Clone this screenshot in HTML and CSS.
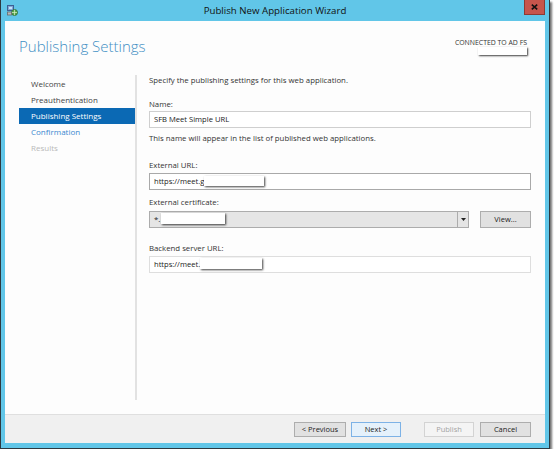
FILE: index.html
```html
<!DOCTYPE html>
<html>
<head>
<meta charset="utf-8">
<link rel="stylesheet" href="styles.css">
</head>
<body>
<div class="window">
  <div class="titlebar">
    <svg class="app-icon" width="11" height="11" viewBox="0 0 11 11">
      <rect x="0.5" y="0.5" width="6" height="5" fill="#7fa8d6" stroke="#3d5f93" stroke-width="1"/>
      <rect x="2" y="2" width="3" height="2" fill="#c6e0f7"/>
      <circle cx="7.5" cy="7.5" r="3" fill="#5aa84c" stroke="#2f6b35" stroke-width="0.8"/>
      <path d="M5 7.5h5M7.5 4.8v5.4" stroke="#d8f0c8" stroke-width="0.7"/>
      <rect x="0.5" y="7" width="4" height="3" fill="#b9b9b9" stroke="#6a6a6a" stroke-width="0.8"/>
    </svg>
    <div class="title">Publish New Application Wizard</div>
    <div class="close">
      <svg width="7" height="6" viewBox="0 0 7 6"><path d="M0.8 0.6L6.2 5.4M6.2 0.6L0.8 5.4" stroke="#111" stroke-width="1.6"/></svg>
    </div>
  </div>
  <div class="client">
    <div class="header">
      <h1 class="page-title">Publishing Settings</h1>
      <div class="conn">
        <div class="conn-text">CONNECTED TO AD FS</div>
        <span class="redact conn-redact"></span>
      </div>
    </div>
    <div class="body">
      <div class="nav">
        <div class="nav-item">Welcome</div>
        <div class="nav-item">Preauthentication</div>
        <div class="nav-item active">Publishing Settings</div>
        <div class="nav-item link">Confirmation</div>
        <div class="nav-item disabled">Results</div>
      </div>
      <div class="sep"></div>
      <div class="main">
        <div class="intro">Specify the publishing settings for this web application.</div>
        <div class="label l-name">Name:</div>
        <div class="input">SFB Meet Simple URL</div>
        <div class="help">This name will appear in the list of published web applications.</div>
        <div class="label l-ext">External URL:</div>
        <div class="input focus">https://meet.g<span class="redact r-ext"></span></div>
        <div class="label l-cert">External certificate:</div>
        <div class="cert-row">
          <div class="combo">
            <div class="combo-value">*.<span class="redact r-cert"></span></div>
            <div class="combo-arrow"><svg width="5" height="3" viewBox="0 0 5 3"><path d="M0 0h5L2.5 3z" fill="#222"/></svg></div>
          </div>
          <div class="btn view">View...</div>
        </div>
        <div class="label l-back">Backend server URL:</div>
        <div class="input light">https://meet.<span class="redact r-back"></span></div>
      </div>
    </div>
    <div class="footer">
      <div class="btn prev">&lt; Previous</div>
      <div class="btn next">Next &gt;</div>
      <div class="btn publish">Publish</div>
      <div class="btn cancel">Cancel</div>
    </div>
  </div>
</div>
</body>
</html>
```
FILE: styles.css
```css
html, body {
  margin: 0;
  background: #ffffff;
}
body {
  font-family: "Open Sans", "Noto Sans", sans-serif;
  color: #333;
}
.window {
  width: 550px;
  height: 449px;
  box-sizing: border-box;
  background: #61c6e8;
  border: 1px solid #2e3940;
  border-top: none;
  padding: 0 4px 5px;
  display: flex;
  flex-direction: column;
  box-shadow: 2px 2px 2px rgba(0, 0, 0, 0.55);
}
.titlebar {
  height: 21px;
  flex: none;
  display: grid;
  grid-template-columns: 1fr auto 1fr;
  align-items: center;
}
.app-icon {
  margin-left: 2px;
  margin-top: -1px;
}
.title {
  font-size: 9.7px;
  color: #111;
  margin-top: -1px;
}
.close {
  justify-self: end;
  align-self: start;
  width: 21px;
  height: 15px;
  box-sizing: border-box;
  background: #c6554c;
  border: 1px solid #8d3a33;
  border-top: none;
  display: flex;
  align-items: center;
  justify-content: center;
}
.client {
  flex: 1;
  background: #fdfdfd;
  display: flex;
  flex-direction: column;
  min-height: 0;
}
.header {
  height: 52px;
  flex: none;
  display: flex;
  justify-content: space-between;
  align-items: flex-start;
}
.page-title {
  margin: 0;
  padding: 16px 0 0 14px;
  font-size: 15px;
  line-height: 18px;
  font-weight: 300;
  color: #3f8fc4;
}
.conn {
  margin: 17px 18px 0 0;
  display: flex;
  flex-direction: column;
  align-items: flex-end;
}
.conn-text {
  font-size: 6.9px;
  line-height: 9px;
  color: #333;
}
.redact {
  display: inline-block;
  background: #ffffff;
  box-shadow: 1px 1px 2px rgba(0, 0, 0, 0.75);
  vertical-align: middle;
}
.conn-redact {
  width: 49px;
  height: 8px;
  margin-top: 0;
}
.body {
  flex: 1;
  display: flex;
  min-height: 0;
}
.nav {
  width: 116px;
  margin-left: 14px;
  padding-top: 3px;
  flex: none;
}
.nav-item {
  height: 16px;
  line-height: 16px;
  padding-left: 12px;
  font-size: 8px;
  color: #444;
}
.nav-item.active {
  background: #0b69b4;
  color: #fff;
}
.nav-item.link {
  color: #3a88d0;
}
.nav-item.disabled {
  color: #b9b9b9;
}
.sep {
  width: 2px;
  background: #e2e2e2;
  margin: 2px 0 14px;
  flex: none;
}
.main {
  flex: 1;
  padding: 0 14px 0 12px;
  font-size: 7.8px;
  color: #333;
}
.intro, .label, .help {
  line-height: 14px;
}
.label { margin-bottom: 0; }
.l-name { margin-top: 10px; }
.l-ext { margin-top: 13px; margin-bottom: 1px; }
.l-cert { margin-top: 5px; margin-bottom: 2px; }
.l-back { margin-top: 13px; margin-bottom: 1px; }
.help { margin-top: 3px; }
.input {
  height: 17px;
  box-sizing: border-box;
  border: 1px solid #cfcfcf;
  background: #fff;
  padding: 0 4px;
  line-height: 15px;
  font-size: 7.6px;
  color: #222;
  white-space: nowrap;
}
.input.focus { border-color: #a9a9a9; }
.input.light { border-color: #dedede; }
.r-ext { width: 60px; height: 10px; margin-top: -2px; }
.r-back { width: 62px; height: 11px; margin-top: -2px; }
.r-cert { width: 64px; height: 11px; margin-left: 1px; margin-top: -2px; }
.cert-row {
  display: flex;
  gap: 11px;
}
.combo {
  flex: 1;
  height: 17px;
  box-sizing: border-box;
  border: 1px solid #acacac;
  background: #e5e5e5;
  display: flex;
}
.combo-value {
  flex: 1;
  padding-left: 4px;
  line-height: 15px;
  color: #222;
}
.combo-arrow {
  width: 10px;
  border-left: 1px solid #acacac;
  display: flex;
  align-items: center;
  justify-content: center;
}
.btn {
  height: 17px;
  box-sizing: border-box;
  border: 1px solid #adadad;
  background: #e1e1e1;
  color: #222;
  font-size: 7.5px;
  line-height: 15px;
  text-align: center;
}
.view { width: 51px; }
.footer {
  height: 29px;
  flex: none;
  box-sizing: border-box;
  border-top: 1px solid #dfdfdf;
  background: #f0f0f0;
  display: flex;
  justify-content: flex-end;
  align-items: flex-start;
  padding: 7px 14px 0 0;
}
.footer .btn { height: 15px; line-height: 13px; }
.prev { width: 52px; }
.next { width: 50px; margin-left: 5px; border-color: #7db2e6; background: #e5f1fb; }
.publish { width: 50px; margin-left: 23px; background: #f4f4f4; border-color: #d3d3d3; color: #a3a3a3; }
.cancel { width: 51px; margin-left: 6px; }
```
